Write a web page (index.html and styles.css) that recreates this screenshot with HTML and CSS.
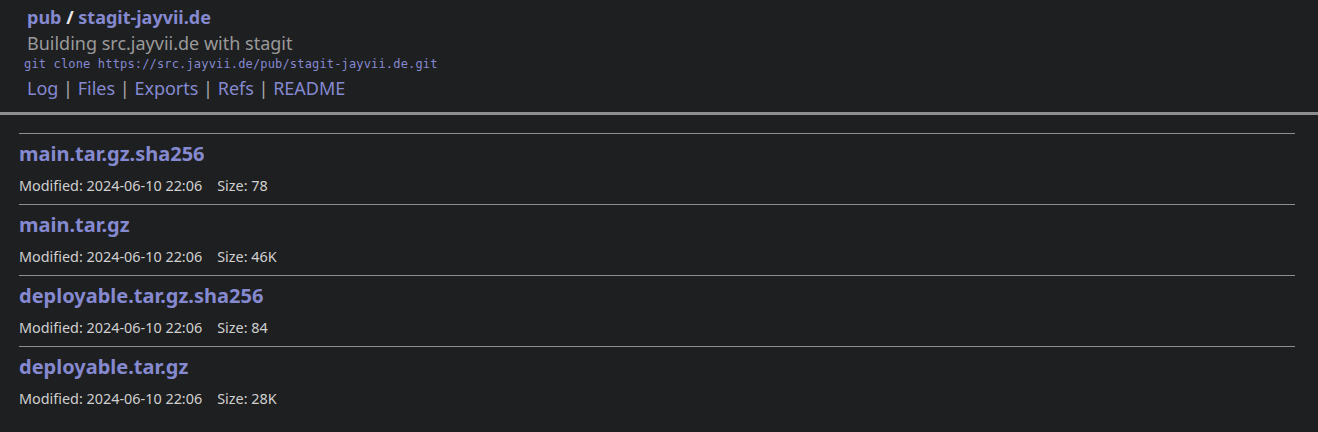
FILE: index.html
```html
<!DOCTYPE html>
<html>
<head>
<meta charset="utf-8">
<link rel="stylesheet" href="styles.css">
</head>
<body>
<header class="head">
  <h1 class="title"><a href="#">pub</a> / <a href="#">stagit-jayvii.de</a></h1>
  <p class="desc">Building src.jayvii.de with stagit</p>
  <p class="clone">git clone <a href="#">https://src.jayvii.de/pub/stagit-jayvii.de.git</a></p>
  <nav class="nav"><a href="#">Log</a> | <a href="#">Files</a> | <a href="#">Exports</a> | <a href="#">Refs</a> | <a href="#">README</a></nav>
</header>
<main class="content">
  <div class="item">
    <h2 class="name"><a href="#">main.tar.gz.sha256</a></h2>
    <p class="meta">Modified: 2024-06-10 22:06<span class="sz">Size: 78</span></p>
  </div>
  <div class="item">
    <h2 class="name"><a href="#">main.tar.gz</a></h2>
    <p class="meta">Modified: 2024-06-10 22:06<span class="sz">Size: 46K</span></p>
  </div>
  <div class="item">
    <h2 class="name"><a href="#">deployable.tar.gz.sha256</a></h2>
    <p class="meta">Modified: 2024-06-10 22:06<span class="sz">Size: 84</span></p>
  </div>
  <div class="item">
    <h2 class="name"><a href="#">deployable.tar.gz</a></h2>
    <p class="meta">Modified: 2024-06-10 22:06<span class="sz">Size: 28K</span></p>
  </div>
</main>
</body>
</html>
```

FILE: styles.css
```css
html, body {
  margin: 0;
  padding: 0;
  background: #1e1f21;
  color: #d0d0d0;
  font-family: "Noto Sans", sans-serif;
}
a {
  color: #8589d0;
  text-decoration: none;
}
.head {
  padding: 4px 0 0 27px;
  border-bottom: 3px solid #8e8e8e;
  height: 115px;
  box-sizing: border-box;
}
.title {
  margin: 0;
  font-size: 18px;
  line-height: 26px;
  font-weight: 700;
  color: #e8e8e8;
}
.desc {
  margin: 0;
  font-size: 18px;
  line-height: 26px;
  color: #9a9a9a;
}
.clone {
  margin: 0 0 0 -3px;
  font-family: "DejaVu Sans Mono", monospace;
  font-size: 12px;
  line-height: 16px;
  letter-spacing: 0.16px;
  color: #8589d0;
}
.nav {
  font-size: 18px;
  line-height: 26px;
  color: #aaaaaa;
  margin-top: 3px;
}
.content {
  padding: 18px 23px 0 19px;
}
.item {
  border-top: 1px solid #8e8e8e;
  height: 71px;
  box-sizing: border-box;
}
.name {
  margin: 0;
  padding-top: 7px;
  font-size: 20px;
  line-height: 26px;
  font-weight: 700;
}
.meta {
  margin: 0;
  padding-top: 9px;
  font-size: 14.4px;
  line-height: 20px;
  color: #d0d0d0;
}
.sz {
  margin-left: 15px;
}
```
